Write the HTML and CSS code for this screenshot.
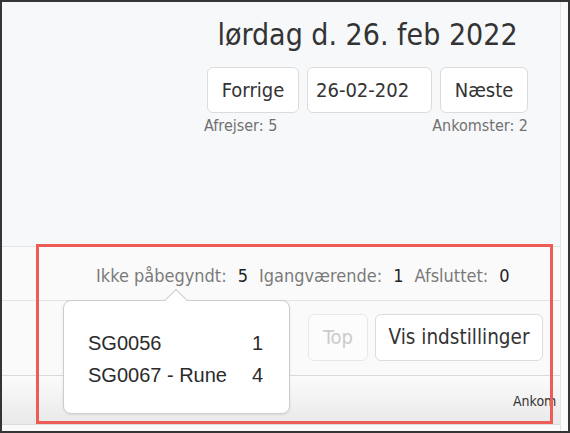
FILE: index.html
```html
<!DOCTYPE html>
<html lang="da">
<head>
<meta charset="utf-8">
<title>Dagsoversigt</title>
<link rel="stylesheet" href="styles.css">
</head>
<body>
<div class="frame">
  <div class="app">
    <div class="main">
      <header class="datebar">
        <div class="datebox">
          <h1 class="title">lørdag d. 26. feb 2022</h1>
          <div class="nav">
            <button class="btn btn-prev">Forrige</button>
            <button class="btn btn-date">26-02-202</button>
            <button class="btn btn-next">Næste</button>
          </div>
          <div class="counts">
            <span>Afrejser: 5</span>
            <span>Ankomster: 2</span>
          </div>
        </div>
      </header>
      <div class="status">
        <span class="lbl">Ikke påbegyndt:</span><span class="num">5</span>
        <span class="lbl">Igangværende:</span><span class="num">1</span>
        <span class="lbl">Afsluttet:</span><span class="num">0</span>
      </div>
      <div class="toolbar">
        <button class="btn btn-top" disabled>Top</button>
        <button class="btn btn-settings">Vis indstillinger</button>
      </div>
      <div class="thead">
        <div class="th-cell">Ankom</div>
      </div>
      <div class="tail"></div>
    </div>
    <div class="gutter"></div>
  </div>

  <div class="popover">
    <div class="pop-arrow"></div>
    <div class="pop-grid">
      <span>SG0056</span><span>1</span>
      <span>SG0067 - Rune</span><span>4</span>
    </div>
  </div>

  <div class="highlight"></div>
</div>
</body>
</html>
```

FILE: styles.css
```css
* { box-sizing: border-box; }

html, body {
  margin: 0;
  padding: 0;
  background: #ffffff;
}

body {
  font-family: "DejaVu Sans Condensed", "DejaVu Sans", sans-serif;
  font-stretch: condensed;
  color: #333333;
}

.frame {
  position: relative;
  width: 570px;
  height: 433px;
  border: 2px solid #353535;
  overflow: hidden;
}

.app {
  display: flex;
  height: 100%;
}

.main {
  width: 559px;
  display: flex;
  flex-direction: column;
  border-right: 1px solid #e4e4e6;
  background: #fafafb;
}

.gutter {
  flex: 1;
  background: #fbfbfb;
}

/* header */
.datebar {
  height: 244px;
  background: #f7f8fa;
  display: flex;
  justify-content: flex-end;
  padding-right: 32px;
}

.datebox {
  width: 321px;
  display: flex;
  flex-direction: column;
}

.title {
  margin: 15px 0 0;
  font-size: 30px;
  line-height: 36px;
  font-weight: normal;
  text-align: center;
  color: #333333;
  white-space: nowrap;
}

.nav {
  display: flex;
  gap: 8px;
  margin-top: 14px;
}

.btn {
  font-family: inherit;
  font-stretch: condensed;
  height: 46px;
  border: 1px solid #dcdcdc;
  border-radius: 6px;
  background: #ffffff;
  color: #333333;
  font-size: 20px;
  padding: 0;
  white-space: nowrap;
}

.btn-prev { width: 92px; }
.btn-date { width: 125px; text-align: left; padding-left: 8px; }
.btn-next { width: 88px; }

.counts {
  display: flex;
  justify-content: space-between;
  margin-top: 3px;
  margin-left: -3px;
  font-size: 16px;
  line-height: 19px;
  color: #717171;
}

/* status row */
.status {
  height: 55px;
  border-top: 1px solid #e4e4e6;
  border-bottom: 1px solid #e4e4e6;
  display: flex;
  align-items: center;
  padding: 3px 0 0 94px;
  font-size: 18px;
}

.lbl { color: #7a7a7a; margin-right: 11px; }
.num { color: #222222; margin-right: 11px; }

/* toolbar */
.toolbar {
  height: 74px;
  display: flex;
  justify-content: flex-end;
  align-items: center;
  gap: 7px;
  padding: 0 17px 2px 0;
}

.toolbar .btn { height: 47px; }

.btn-top {
  width: 60px;
  color: #cbcbcb;
  border-color: #e8e8e8;
  background: #fcfcfc;
}

.btn-settings { width: 168px; font-size: 20.5px; }

/* table head */
.thead {
  height: 50px;
  border-top: 1px solid #dadada;
  border-bottom: 1px solid #dcdcdc;
  background: linear-gradient(#fbfbfb, #e9e9e9);
  padding-left: 511px;
  display: flex;
  align-items: flex-end;
  padding-bottom: 14px;
}

.th-cell {
  white-space: nowrap;
  font-size: 14px;
  line-height: 18px;
  color: #333333;
}

.tail {
  flex: 1;
  background: #fafafa;
}

/* popover */
.popover {
  position: absolute;
  left: 61px;
  top: 298px;
  width: 227px;
  height: 114px;
  background: #ffffff;
  border: 1px solid #cdcdcd;
  border-radius: 8px;
  box-shadow: 0 1px 3px rgba(0, 0, 0, 0.08);
  padding: 26px 0 0 24px;
}

.pop-arrow {
  position: absolute;
  left: 104px;
  top: -9px;
  width: 16px;
  height: 16px;
  background: #ffffff;
  border-top: 1px solid #cdcdcd;
  border-left: 1px solid #cdcdcd;
  transform: rotate(45deg);
}

.pop-grid {
  display: grid;
  grid-template-columns: 164px auto;
  font-family: "Liberation Sans", Arial, sans-serif;
  font-stretch: normal;
  font-size: 20px;
  line-height: 32px;
  color: #2b2b2b;
}

/* annotation highlight */
.highlight {
  position: absolute;
  left: 34px;
  top: 242px;
  width: 517px;
  height: 180px;
  border: 3px solid #ee5d55;
  pointer-events: none;
}
```
